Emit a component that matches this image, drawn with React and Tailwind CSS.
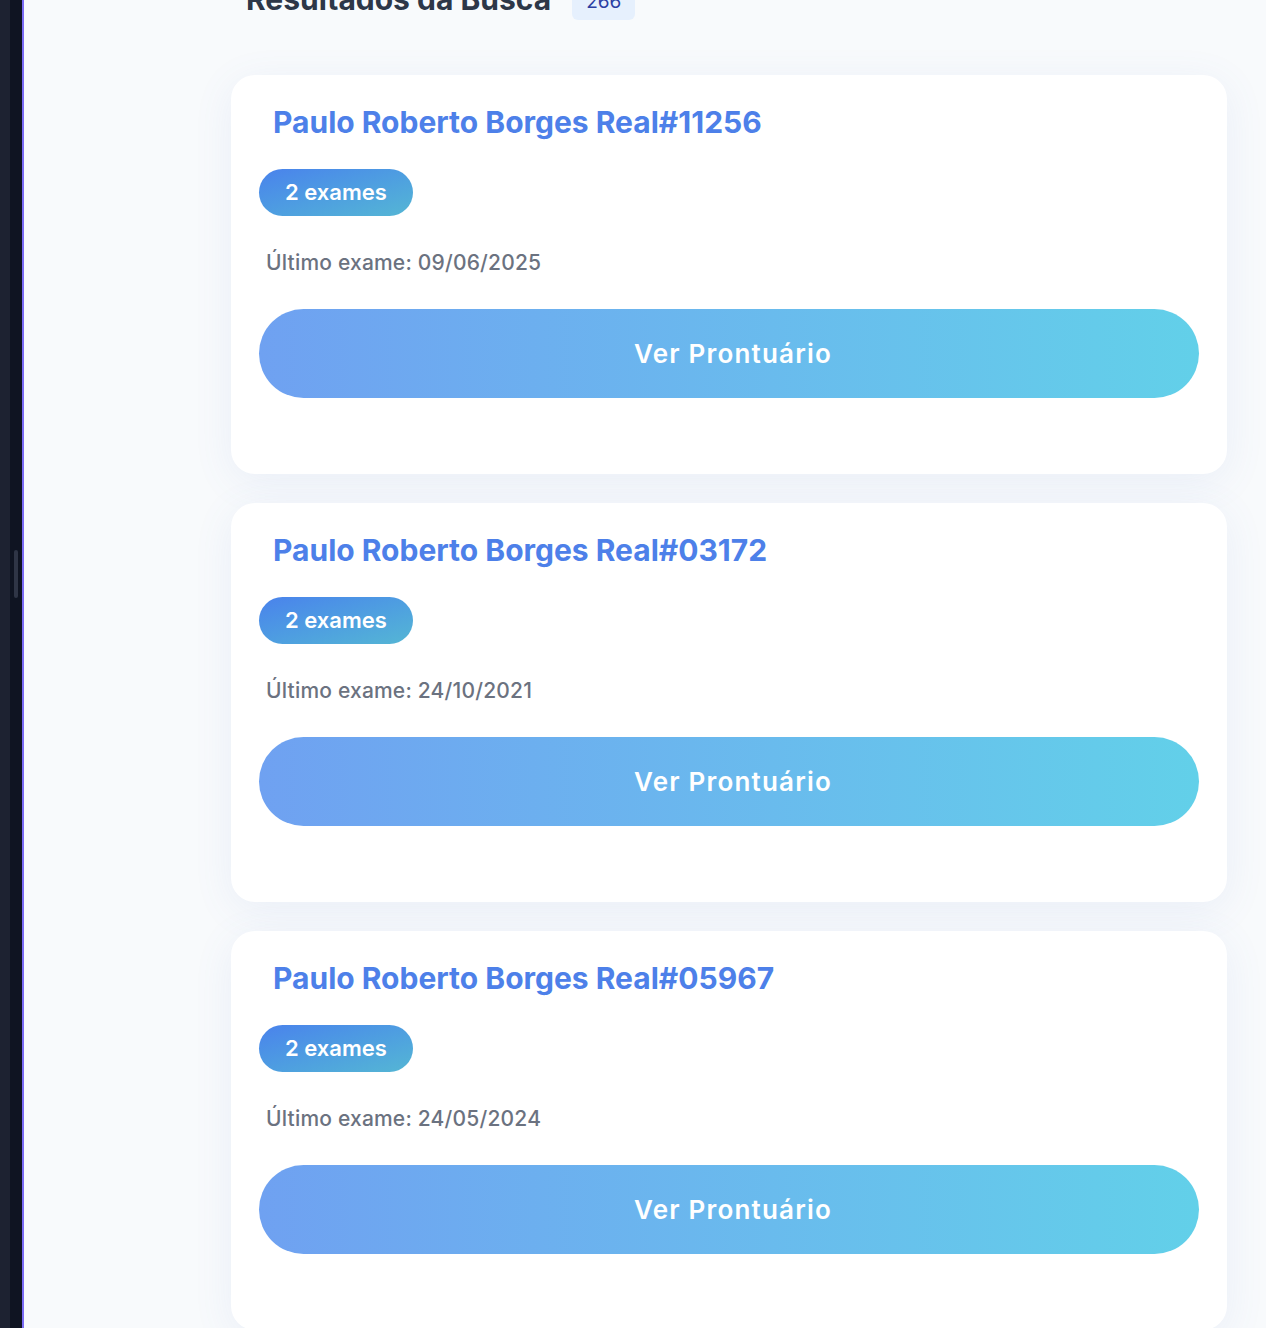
import React from 'react';

const patients = [
    { name: 'Paulo Roberto Borges Real#11256', exams: 2, last: '09/06/2025' },
    { name: 'Paulo Roberto Borges Real#03172', exams: 2, last: '24/10/2021' },
    { name: 'Paulo Roberto Borges Real#05967', exams: 2, last: '24/05/2024' },
];

const PatientCard = ({ patient }) => (
    <div className="bg-white rounded-[24px] shadow-[0_8px_40px_rgba(90,120,200,0.09)] px-7 pt-[29px] pb-[76px]">
        <h3 className="px-[14px] text-[30px] leading-[36px] font-bold text-[#4d80e9]">
            {patient.name}
        </h3>
        <div className="mt-[29px]">
            <span className="inline-block rounded-full bg-gradient-to-br from-[#4a82ec] to-[#55b6d4] px-[26px] py-[10px] text-[22px] leading-[27px] font-semibold text-white">
                {patient.exams} exames
            </span>
        </div>
        <p className="mt-[33px] px-[7px] text-[21px] leading-[28px] font-medium text-[#6b7280] tracking-[0.2px]">
            Último exame: {patient.last}
        </p>
        <button className="mt-[32px] w-full h-[89px] rounded-full bg-gradient-to-r from-[#6fa1f1] to-[#62d0e9] text-white text-[26px] font-semibold tracking-[1.2px] pl-[8px]">
            Ver Prontuário
        </button>
    </div>
);

export default function App() {
    return (
        <div className="h-[1328px] flex overflow-hidden bg-[#f8fafc] font-['Inter',sans-serif]">
            {/* Sidebar edge */}
            <div className="w-[10px] bg-[#1d2231] shrink-0" />
            <div className="w-[12px] bg-[#0f1422] shrink-0 flex flex-col">
                <div className="h-[550px]" />
                <div className="ml-[4px] w-[4px] h-[48px] rounded-full bg-[#2f3546]" />
            </div>
            <div className="w-[2px] bg-[#7b6cf5] shrink-0" />

            {/* Main */}
            <main className="flex-1 pl-[207px] pr-[39px]">
                <div className="-mt-[19px] flex items-start gap-[21px] pl-[15px]">
                    <h2 className="text-[30px] leading-[36px] font-bold text-[#2d3748]">Resultados da Busca</h2>
                    <span className="mt-[3px] rounded-[6px] bg-[#e6f0fd] px-[14px] py-[5px] text-[19px] leading-[26px] text-[#2c3fa3]">266</span>
                </div>
                <div className="mt-[55px] flex flex-col gap-[29px]">
                    {patients.map((p) => (
                        <PatientCard key={p.name} patient={p} />
                    ))}
                </div>
            </main>
        </div>
    );
}
